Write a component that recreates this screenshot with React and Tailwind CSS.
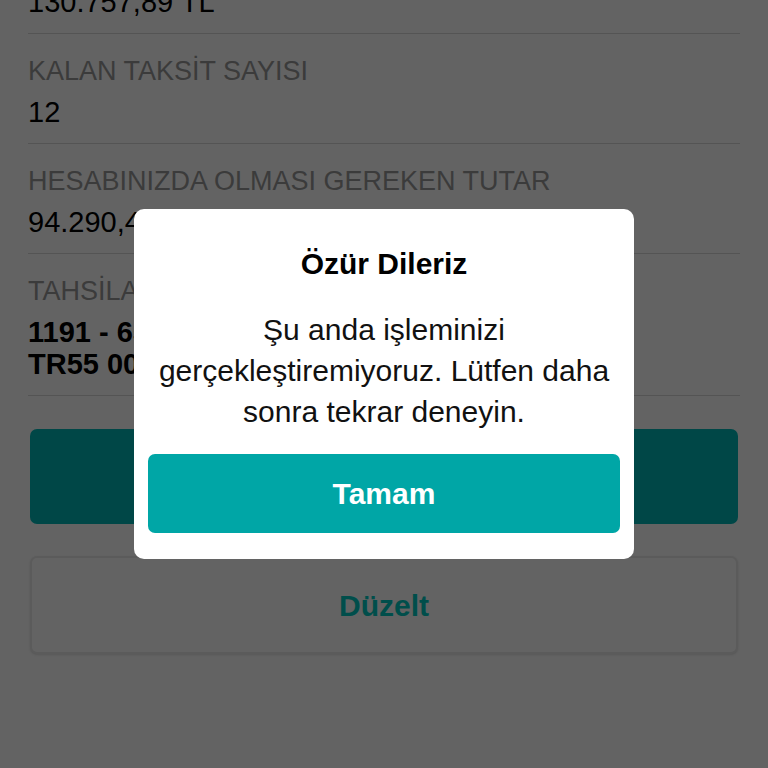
import React from 'react'

const rows = [
    { label: 'KALAN TAKSİT SAYISI', values: ['12'], bold: false },
    { label: 'HESABINIZDA OLMASI GEREKEN TUTAR', values: ['94.290,45 TL'], bold: false },
    { label: 'TAHSİLAT HESABI', values: ['1191 - 6543210 Vadesiz TL', 'TR55 0006 2001 1910 0006 5432 10'], bold: true },
]

function Row({ label, values, bold }) {
    return <div className="border-b border-[#d9d9d9] pt-[22px] pb-[15px]">
        <div className="text-[27px] leading-[30px] text-[#999999] whitespace-nowrap">{label}</div>
        <div className="mt-[10px]">
            {values.map((v) => (
                <div key={v} className={"text-[29px] leading-[32px] text-black whitespace-nowrap " + (bold ? "font-bold" : "font-normal")}>{v}</div>
            ))}
        </div>
    </div>
}

function App() {
    return <div className="h-[768px] w-full overflow-hidden bg-white font-['Liberation_Sans',Arial,sans-serif]">
        <div className="-mt-[76px] px-[28px]">
            <Row label="KALAN ANAPARA" values={['130.757,89 TL']} />
            {rows.map((r) => <Row key={r.label} {...r} />)}

            <div className="px-[2px] pt-[33px] flex flex-col gap-[32px]">
                <button className="h-[95px] w-full rounded-[7px] bg-[#00b8b8] text-white text-[30px] font-bold">Onayla</button>
                <button className="h-[98px] w-full rounded-[7px] border-2 border-[#ebebeb] bg-white text-[#00c9c0] text-[30px] font-bold shadow-sm">Düzelt</button>
            </div>
        </div>

        <div className="fixed inset-0 bg-black/[0.61] flex items-center justify-center">
            <div className="w-[500px] rounded-[10px] bg-white px-[14px] pt-[38px] pb-[26px] flex flex-col items-center">
                <h2 className="text-[30px] leading-[34px] font-bold text-black">Özür Dileriz</h2>
                <p className="mt-[28px] text-[30px] leading-[41px] text-[#111111] text-center">
                    Şu anda işleminizi<br />gerçekleştiremiyoruz. Lütfen daha<br />sonra tekrar deneyin.
                </p>
                <button className="mt-[22px] h-[79px] w-full rounded-[7px] bg-[#00a6a6] text-white text-[30px] font-bold">Tamam</button>
            </div>
        </div>
    </div>
}

export default App
